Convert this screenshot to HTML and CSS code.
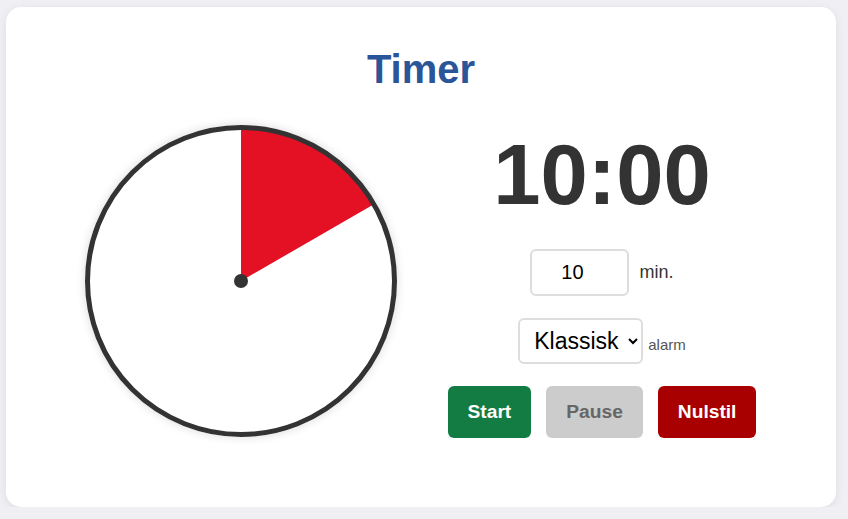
FILE: index.html
```html
<!DOCTYPE html>
<html lang="da">
<head>
    <meta charset="UTF-8">
    <meta name="viewport" content="width=device-width, initial-scale=1.0">
    <title>Timer</title>
    <link rel="stylesheet" href="styles.css">
</head>
<body>
    <div class="card">
        <h1>Timer</h1>
        <div class="timer-row">
            <div class="clock">
                <svg width="312" height="312" viewBox="0 0 312 312">
                    <path d="M156,156 L156,3 A153,153 0 0 1 288.5,79.5 Z" fill="#e41125"/>
                    <circle cx="156" cy="156" r="153.5" fill="none" stroke="#333" stroke-width="5"/>
                    <circle cx="156" cy="156" r="7" fill="#333"/>
                </svg>
            </div>
            <div class="controls">
                <div class="time">10:00</div>
                <div class="line">
                    <input type="number" class="minutes" value="10">
                    <span class="unit">min.</span>
                </div>
                <div class="line">
                    <select class="sound">
                        <option>Klassisk</option>
                        <option>Klokke</option>
                        <option>Bip</option>
                    </select>
                    <span class="hint">alarm</span>
                </div>
                <div class="buttons">
                    <button class="btn start">Start</button>
                    <button class="btn pause">Pause</button>
                    <button class="btn reset">Nulstil</button>
                </div>
            </div>
        </div>
    </div>
</body>
</html>
```

FILE: styles.css
```css
body {
    margin: 0;
    padding: 7px 0 0 6px;
    background: #efeff4;
    font-family: "Liberation Sans", Arial, sans-serif;
    color: #333;
}
.card {
    box-sizing: border-box;
    width: 830px;
    height: 500px;
    padding-top: 40px;
    background: #fff;
    border-radius: 15px;
    box-shadow: 0 2px 10px rgba(0, 0, 0, 0.08);
}
h1 {
    margin: 0 0 31px;
    text-align: center;
    font-size: 40px;
    color: #2a5599;
}
.timer-row {
    display: flex;
    justify-content: center;
    align-items: center;
    gap: 51px;
    padding-right: 1px;
}
.clock {
    width: 312px;
    height: 312px;
    border-radius: 50%;
    box-shadow: 0 0 10px rgba(0, 0, 0, 0.15);
}
.clock svg {
    display: block;
}
.controls {
    width: 309px;
    display: flex;
    flex-direction: column;
    align-items: center;
}
.time {
    font-size: 85px;
    line-height: 104px;
    font-weight: bold;
    color: #333;
}
.line {
    display: flex;
    align-items: center;
    gap: 10px;
    margin-top: 22px;
}
.line + .line {
    gap: 5px;
}
.minutes {
    box-sizing: border-box;
    width: 99px;
    height: 47px;
    padding: 0 4px;
    border: 2px solid #ddd;
    border-radius: 6px;
    text-align: center;
    font-family: inherit;
    font-size: 20px;
    color: #000;
}
.unit {
    font-size: 18px;
    color: #333;
}
.sound {
    box-sizing: border-box;
    height: 46px;
    padding: 0 6px 0 10px;
    border: 2px solid #ddd;
    border-radius: 6px;
    background: #fff;
    font-family: inherit;
    font-size: 23px;
    color: #000;
}
.hint {
    font-size: 15px;
    color: #555;
    padding-top: 6px;
}
.buttons {
    display: flex;
    gap: 15px;
    margin-top: 22px;
}
.btn {
    padding: 15px 20px;
    border: none;
    border-radius: 6px;
    font-family: inherit;
    font-size: 19.2px;
    font-weight: bold;
    color: #fff;
    cursor: pointer;
}
.start {
    background: #137c43;
}
.pause {
    background: #ccc;
    color: #666;
}
.reset {
    background: #a80000;
}
```
